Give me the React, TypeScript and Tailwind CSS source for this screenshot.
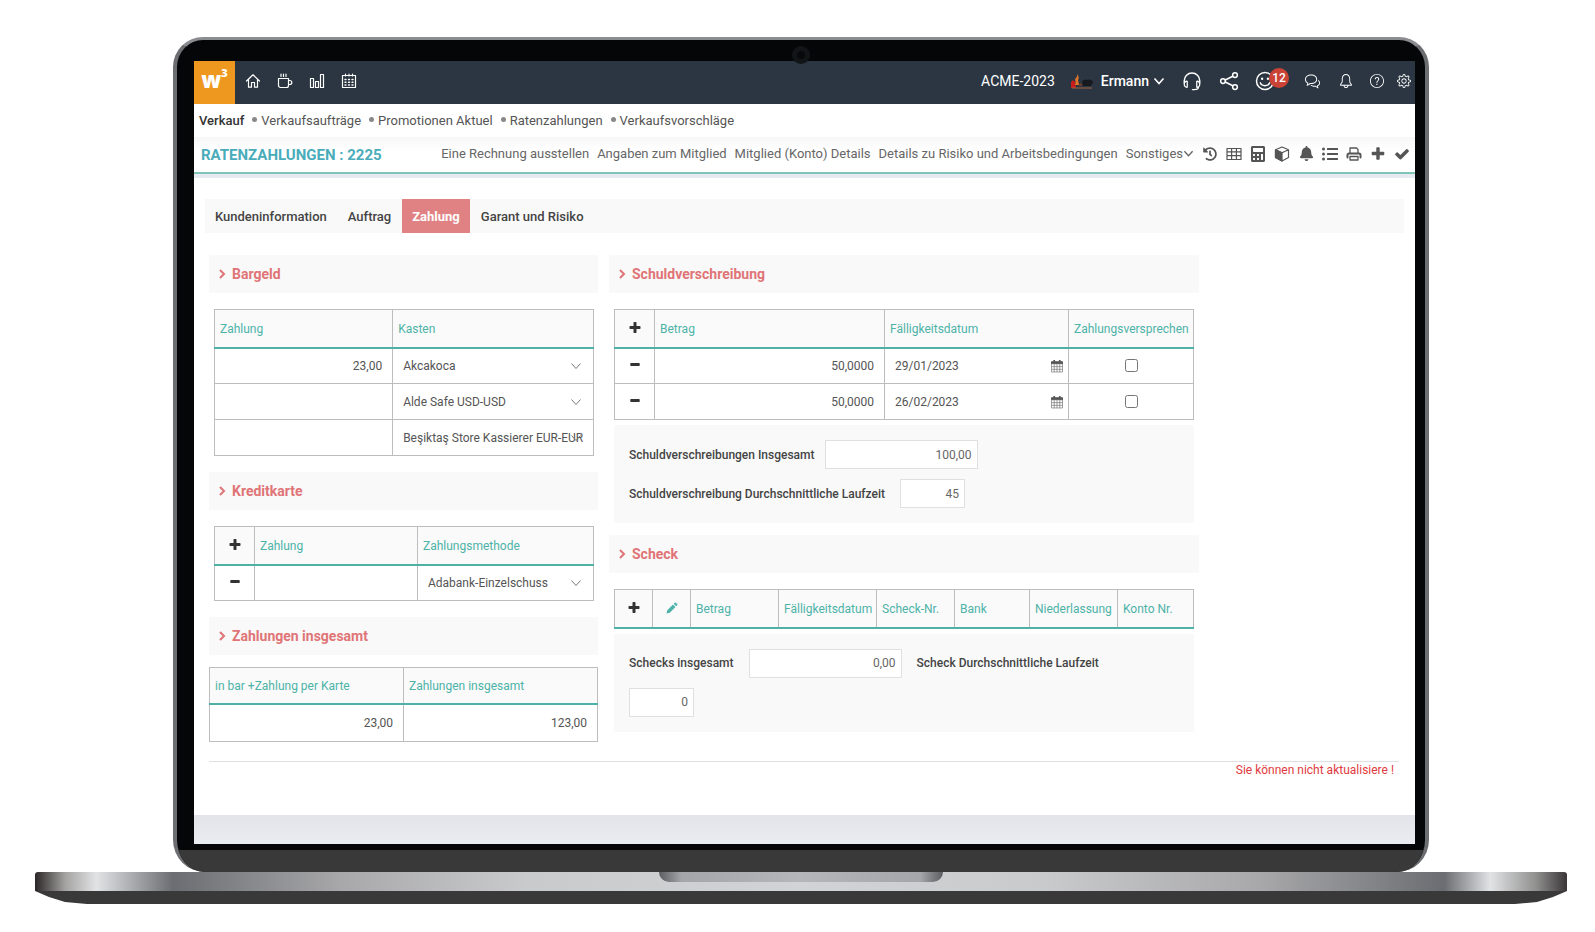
import { ReactNode, useState } from "react";
import { FaBell, FaCalculator, FaHistory, FaListUl } from "react-icons/fa";
import { SlBell, SlBubbles, SlQuestion, SlSettings } from "react-icons/sl";

type IconProps = { className?: string; children?: ReactNode };

// thin outline icons of the top bar
const Line = ({ className = "size-4", children }: IconProps) => (
  <svg
    viewBox="0 0 16 16"
    className={className}
    fill="none"
    stroke="currentColor"
    strokeWidth="1.2"
    strokeLinecap="round"
    strokeLinejoin="round"
    aria-hidden="true"
  >
    {children}
  </svg>
);

const Solid = ({ className = "size-4", children }: IconProps) => (
  <svg viewBox="0 0 1792 1792" className={className} fill="currentColor" aria-hidden="true">
    {children}
  </svg>
);

const Plus = ({ className }: IconProps) => (
  <Solid className={className}>
    <path d="M1600 736v192q0 40-28 68t-68 28h-416v416q0 40-28 68t-68 28h-192q-40 0-68-28t-28-68v-416h-416q-40 0-68-28t-28-68v-192q0-40 28-68t68-28h416v-416q0-40 28-68t68-28h192q40 0 68 28t28 68v416h416q40 0 68 28t28 68z" />
  </Solid>
);

const Minus = ({ className }: IconProps) => (
  <Solid className={className}>
    <path d="M1500 736v192q0 40-28 68t-68 28h-1016q-40 0-68-28t-28-68v-192q0-40 28-68t68-28h1016q40 0 68 28t28 68z" />
  </Solid>
);

const Check = ({ className }: IconProps) => (
  <Solid className={className}>
    <path d="M1671 566q0 40-28 68l-724 724-136 136q-28 28-68 28t-68-28l-136-136-362-362q-28-28-28-68t28-68l136-136q28-28 68-28t68 28l294 295 656-657q28-28 68-28t68 28l136 136q28 28 28 68z" />
  </Solid>
);

const Down = ({ className = "size-3" }: IconProps) => (
  <svg viewBox="0 0 12 12" className={className} fill="none" stroke="currentColor" aria-hidden="true">
    <path d="M1.5 3.5 6 8.5l4.5-5" />
  </svg>
);

const Calendar = () => (
  <svg viewBox="0 0 13 14" className="h-[14px] w-[12px]" fill="none" stroke="currentColor" aria-hidden="true">
    <path d="M.5 2.5h12v2H.5z" fill="currentColor" />
    <path d="M.5 2.5h12v11H.5zM.5 7.7h12M.5 10.6h12M3.5 5v8.5M6.5 5v8.5M9.5 5v8.5" strokeWidth=".6" />
    <path d="M3.5.5v3M9.5.5v3" strokeWidth="1.8" />
  </svg>
);

const menu = ["Verkaufsaufträge", "Promotionen Aktuel", "Ratenzahlungen", "Verkaufsvorschläge"];

const actions = [
  "Eine Rechnung ausstellen",
  "Angaben zum Mitglied",
  "Mitglied (Konto) Details",
  "Details zu Risiko und Arbeitsbedingungen",
];

const tabs = ["Kundeninformation", "Auftrag", "Zahlung", "Garant und Risiko"];

const cashRows = [
  { amount: "23,00", safe: "Akcakoca" },
  { amount: "", safe: "Alde Safe USD-USD" },
  { amount: "", safe: "Beşiktaş Store Kassierer EUR-EUR" },
];

const bondRows = [
  { amount: "50,0000", date: "29/01/2023" },
  { amount: "50,0000", date: "26/02/2023" },
];

const TopBar = () => (
  <header className="flex h-[43px] items-center bg-[#2b3642] pr-1 text-white">
    <a
      href="#"
      aria-label="W3"
      className="flex h-full w-[41px] justify-center bg-[#ef9820] pt-1 font-['Open_Sans',sans-serif] text-[22px] leading-7 font-extrabold"
    >
      w<sup className="top-0 text-[11px] leading-4">3</sup>
    </a>
    <nav className="ml-[10px] flex gap-4 pb-[3px]">
      <a href="#" aria-label="Home">
        <Line>
          <path d="M1.5 8 8 1.8 14.5 8M3.5 6.5v7.700h3V9.5h3v4.7h3V6.5" />
        </Line>
      </a>
      <a href="#" aria-label="Pause">
        <Line>
          <path d="M1.5 5.5h10v7a2 2 0 0 1-2 2h-6a2 2 0 0 1-2-2zM11.5 7.5h1.3a1.7 1.7 0 0 1 0 4h-1.3M4 1v2.5M6.5 1v2.5M9 1v2.5" />
        </Line>
      </a>
      <a href="#" aria-label="Berichte">
        <Line>
          <path d="M1.5 5.5h3v9h-3zM6.5 8.5h3v6h-3zM11.5 1.5h3v13h-3z" />
        </Line>
      </a>
      <a href="#" aria-label="Kalender">
        <Line>
          <path d="M1.5 2.5h13v12h-13zM4.5 1v2M8 1v2M11.5 1v2" />
          <path d="M4 6.5h1M7.5 6.5h1M11 6.5h1M4 9.2h1M7.5 9.2h1M11 9.2h1M4 12h1M7.5 12h1M11 12h1" strokeWidth="1.4" />
        </Line>
      </a>
    </nav>
    <div className="ml-auto flex items-center pb-[3px] text-[14px]">
      <span>ACME-2023</span>
      <svg viewBox="0 0 22 16" className="ml-4 h-4 w-[22px]" aria-hidden="true">
        <path d="M0 15V9l2-2 2 2 1 6z" fill="#c81e1e" />
        <path d="M4 12q1-4 0-6 2-1 2.500-5 2 4 .500 6l1 5z" fill="#e2762b" />
        <path d="M8 10.500h3v2.500H8z" fill="#6a3b2f" />
        <path d="M11 9q2-3.500 5-2 4-1.500 6 2l-2 4h-8z" fill="#16191e" />
        <path d="M1 15h20" stroke="#a5623e" />
      </svg>
      <button type="button" className="ml-2 flex items-center gap-1 font-medium">
        Ermann <Down className="size-3 stroke-[1.6]" />
      </button>
      <a href="#" aria-label="Support" className="ml-[17px]">
        <Line className="size-5">
          <path d="M1.800 9.500V7.800a6.200 6.200 0 0 1 12.400 0v1.700" />
          <path d="M4.200 8.200c-3.200-.4-3.200 5.200 0 4.800zM11.800 8.200c3.200-.4 3.200 5.200 0 4.800zM13.300 12.500c0 1.700-1.500 2.300-3.600 2.300H8.300" strokeWidth="1" />
        </Line>
      </a>
      <a href="#" aria-label="Teilen" className="ml-[17px]">
        <Line className="size-5">
          <circle cx="3.2" cy="8" r="1.9" />
          <circle cx="12.8" cy="3.2" r="1.9" />
          <circle cx="12.8" cy="12.8" r="1.9" />
          <path d="m5 7.2 6-3M5 8.8l6 3" />
        </Line>
      </a>
      <a href="#" aria-label="Stimmung" className="relative ml-[16px]">
        <Line className="size-5">
          <circle cx="8" cy="8" r="6.8" />
          <path d="M4.3 9.5c1 3 6.4 3 7.4 0" />
          <path d="M5.7 6v.3M10.3 6v.3" strokeWidth="1.8" />
        </Line>
        <span className="absolute -top-[3px] left-[14px] flex size-5 items-center justify-center rounded-full bg-[#cb4335] text-[12px] font-medium">
          12
        </span>
      </a>
      <a href="#" aria-label="Chat" className="ml-[30px]">
        <SlBubbles className="size-[15px]" />
      </a>
      <a href="#" aria-label="Meldungen" className="ml-[19px]">
        <SlBell className="size-[14px]" />
      </a>
      <a href="#" aria-label="Hilfe" className="ml-[17px]">
        <SlQuestion className="size-[14px]" />
      </a>
      <a href="#" aria-label="Einstellungen" className="ml-[13px]">
        <SlSettings className="size-[14px]" />
      </a>
    </div>
  </header>
);

const ActionBar = () => (
  <div className="flex h-[37px] items-center justify-between border-b-2 border-[#7fc4b8] bg-gradient-to-b from-[#f7f7f8] to-white to-40% pr-[5px] pl-[7px]">
    <h1 className="pt-px text-[15px] font-bold text-[#4aacba]">RATENZAHLUNGEN : 2225</h1>
    <div className="flex items-center pb-0.5 text-[13px] text-[#666]">
      <nav className="flex gap-2">
        {actions.map((a) => (
          <a key={a} href="#">
            {a}
          </a>
        ))}
        <button type="button" className="flex items-center">
          Sonstiges <Down className="size-[11px] stroke-[1.5]" />
        </button>
      </nav>
      <div className="ml-2 flex items-center gap-2 text-[#555]">
        <button type="button" aria-label="Verlauf" className="flex w-4 justify-center">
          <FaHistory className="size-[14px]" />
        </button>
        <button type="button" aria-label="Tabelle">
          <Line>
            <path d="M1 2.5h14v11H1zM1 5.8h14M1 9.6h14M5.6 2.5v11M10.4 2.5v11" />
          </Line>
        </button>
        <button type="button" aria-label="Rechner" className="flex w-4 justify-center">
          <FaCalculator className="size-4" />
        </button>
        <button type="button" aria-label="Produkte">
          <Line>
            <path d="M8 1 14.5 3.8v7.7L8 15l-6.5-3.5V3.8zM1.5 3.8 8 6.8l6.5-3" />
            <path d="M1.5 3.8 8 6.8V15l-6.5-3.5z" fill="currentColor" />
          </Line>
        </button>
        <button type="button" aria-label="Erinnerung" className="flex w-4 justify-center">
          <FaBell className="size-[15px]" />
        </button>
        <button type="button" aria-label="Liste">
          <FaListUl className="size-4" />
        </button>
        <button type="button" aria-label="Drucken">
          <Line>
            <path d="M4 7V2h6.5L12 3.5V7M4 10.5h8V14H4z" strokeWidth="1.3" />
            <path d="M1.5 11.5V9A1.5 1.5 0 0 1 3 7.5h10A1.5 1.5 0 0 1 14.5 9v2.5" strokeWidth="2" />
          </Line>
        </button>
        <button type="button" aria-label="Neu">
          <Plus />
        </button>
        <button type="button" aria-label="Speichern">
          <Check />
        </button>
      </div>
    </div>
  </div>
);

const SectionTitle = ({ children }: { children: ReactNode }) => (
  <h2 className="flex h-[38px] items-center gap-1.5 bg-[#f9f9f9] px-[10px] text-[14px] font-bold text-[#e07477]">
    <svg viewBox="0 0 7 10" className="h-[10px] w-[7px]" fill="none" stroke="currentColor" strokeWidth="2" aria-hidden="true">
      <path d="m1 1 4 4-4 4" />
    </svg>
    {children}
  </h2>
);

const Th = ({ children }: { children: ReactNode }) => (
  <th className="border border-b-2 border-[#bdbdbd] border-b-[#4db1a6] bg-[#fafafa] px-[5px] pt-[3px] pb-px text-left font-normal whitespace-nowrap text-[#4db3a8]">
    {children}
  </th>
);

const Td = ({ children }: { children: ReactNode }) => <td className="border border-[#bdbdbd] p-0">{children}</td>;

const IconButton = ({ label, children }: { label: string; children: ReactNode }) => (
  <button type="button" aria-label={label} className="flex w-full justify-center pb-0.5 text-[#333]">
    {children}
  </button>
);

const Amount = ({ label, value }: { label: string; value: string }) => (
  <input aria-label={label} defaultValue={value} className="block w-full bg-transparent px-[10px] text-right" />
);

const Select = ({ label, value }: { label: string; value: string }) => (
  <div className="relative">
    <select aria-label={label} defaultValue={value} className="block w-full appearance-none px-[10px]">
      <option>{value}</option>
    </select>
    <span className="pointer-events-none absolute inset-y-0 right-[11px] flex items-center text-[#777]">
      <Down />
    </span>
  </div>
);

const Field = ({ id, label, value, className }: { id: string; label: string; value: string; className: string }) => (
  <>
    <label htmlFor={id} className="font-medium">
      {label}
    </label>
    <input
      id={id}
      defaultValue={value}
      className={`h-[29px] border border-[#e0e0e0] bg-white px-[5px] text-right text-[#666] ${className}`}
    />
  </>
);

const Payment = () => (
  <div className="grid grid-cols-[389fr_590fr_194fr] gap-x-[11px] pl-1 text-[12px] text-[#555]">
    <div>
      <SectionTitle>Bargeld</SectionTitle>
      <div className="my-4 pr-1 pl-[5px]">
        <table className="w-full table-fixed border-collapse">
          <colgroup>
            <col className="w-[47%]" />
            <col />
          </colgroup>
          <thead>
            <tr className="h-[38px]">
              <Th>Zahlung</Th>
              <Th>Kasten</Th>
            </tr>
          </thead>
          <tbody>
            {cashRows.map((r) => (
              <tr key={r.safe} className="h-9">
                <Td>
                  <Amount label="Zahlung" value={r.amount} />
                </Td>
                <Td>
                  <Select label="Kasten" value={r.safe} />
                </Td>
              </tr>
            ))}
          </tbody>
        </table>
      </div>

      <SectionTitle>Kreditkarte</SectionTitle>
      <div className="my-4 pr-1 pl-[5px]">
        <table className="w-full table-fixed border-collapse">
          <colgroup>
            <col className="w-10" />
            <col className="w-[43%]" />
            <col />
          </colgroup>
          <thead>
            <tr className="h-[38px]">
              <Th>
                <IconButton label="Zeile hinzufügen">
                  <Plus className="size-[14px]" />
                </IconButton>
              </Th>
              <Th>Zahlung</Th>
              <Th>Zahlungsmethode</Th>
            </tr>
          </thead>
          <tbody>
            <tr className="h-9">
              <Td>
                <IconButton label="Zeile löschen">
                  <Minus className="size-[14px]" />
                </IconButton>
              </Td>
              <Td>
                <Amount label="Zahlung" value="" />
              </Td>
              <Td>
                <Select label="Zahlungsmethode" value="Adabank-Einzelschuss" />
              </Td>
            </tr>
          </tbody>
        </table>
      </div>

      <SectionTitle>Zahlungen insgesamt</SectionTitle>
      <table className="mt-3 w-full table-fixed border-collapse">
        <thead>
          <tr className="h-9">
            <Th>in bar +Zahlung per Karte</Th>
            <Th>Zahlungen insgesamt</Th>
          </tr>
        </thead>
        <tbody>
          <tr className="h-[38px]">
            <Td>
              <Amount label="in bar + Zahlung per Karte" value="23,00" />
            </Td>
            <Td>
              <Amount label="Zahlungen insgesamt" value="123,00" />
            </Td>
          </tr>
        </tbody>
      </table>
    </div>

    <div>
      <SectionTitle>Schuldverschreibung</SectionTitle>
      <div className="mt-4 mb-3 px-[5px]">
        <table className="w-full table-fixed border-collapse">
          <colgroup>
            <col className="w-10" />
            <col />
            <col className="w-[184px]" />
            <col className="w-[125px]" />
          </colgroup>
          <thead>
            <tr className="h-[38px]">
              <Th>
                <IconButton label="Zeile hinzufügen">
                  <Plus className="size-[14px]" />
                </IconButton>
              </Th>
              <Th>Betrag</Th>
              <Th>Fälligkeitsdatum</Th>
              <Th>Zahlungsversprechen</Th>
            </tr>
          </thead>
          <tbody>
            {bondRows.map((r) => (
              <tr key={r.date} className="h-9">
                <Td>
                  <IconButton label="Zeile löschen">
                    <Minus className="size-[14px]" />
                  </IconButton>
                </Td>
                <Td>
                  <Amount label="Betrag" value={r.amount} />
                </Td>
                <Td>
                  <div className="flex items-center pr-[5px] pl-[10px]">
                    <input aria-label="Fälligkeitsdatum" defaultValue={r.date} className="min-w-0 flex-1" />
                    <button type="button" aria-label="Kalender öffnen">
                      <Calendar />
                    </button>
                  </div>
                </Td>
                <Td>
                  <input type="checkbox" aria-label="Zahlungsversprechen" className="mx-auto block size-[13px]" />
                </Td>
              </tr>
            ))}
          </tbody>
        </table>
        <div className="mt-[5px] flex flex-col gap-[10px] bg-[#f9f9f9] p-[15px] text-[#444]">
          <div className="flex items-center gap-[10px]">
            <Field id="bond-total" label="Schuldverschreibungen Insgesamt" value="100,00" className="w-[153px]" />
          </div>
          <div className="flex items-center gap-[15px]">
            <Field id="bond-term" label="Schuldverschreibung Durchschnittliche Laufzeit" value="45" className="w-[65px]" />
          </div>
        </div>
      </div>

      <SectionTitle>Scheck</SectionTitle>
      <div className="mt-4 px-[5px]">
        <table className="w-full table-fixed border-collapse">
          <colgroup>
            <col className="w-[38px]" />
            <col className="w-[38px]" />
            <col className="w-[88px]" />
            <col className="w-[98px]" />
            <col className="w-[78px]" />
            <col className="w-[75px]" />
            <col className="w-[88px]" />
            <col />
          </colgroup>
          <thead>
            <tr className="h-[38px]">
              <Th>
                <IconButton label="Scheck hinzufügen">
                  <Plus className="size-[14px]" />
                </IconButton>
              </Th>
              <Th>
                <button type="button" aria-label="Scheck bearbeiten" className="flex w-full justify-center pb-0.5">
                  <svg viewBox="0 0 12 12" className="size-3" fill="currentColor" aria-hidden="true">
                    <path d="M.5 11.5 1.3 8.2 7 2.5 9.5 5 3.8 10.7zM7.7 1.8 8.7.8q.6-.6 1.2 0l1.3 1.3q.6.6 0 1.2l-1 1z" />
                  </svg>
                </button>
              </Th>
              <Th>Betrag</Th>
              <Th>Fälligkeitsdatum</Th>
              <Th>Scheck-Nr.</Th>
              <Th>Bank</Th>
              <Th>Niederlassung</Th>
              <Th>Konto Nr.</Th>
            </tr>
          </thead>
        </table>
        <div className="mt-[5px] flex flex-wrap items-center gap-x-[15px] gap-y-[10px] bg-[#f9f9f9] py-[15px] pr-20 pl-[15px] text-[#444]">
          <Field id="check-total" label="Schecks insgesamt" value="0,00" className="w-[153px]" />
          <Field id="check-term" label="Scheck Durchschnittliche Laufzeit" value="0" className="w-[65px]" />
        </div>
      </div>
    </div>
  </div>
);

const App = () => {
  const [tab, setTab] = useState("Zahlung");

  return (
    <div className="min-h-screen bg-white pt-[37px] pr-[28px] pl-[35px] font-[Roboto,sans-serif]">
      {/* lid */}
      <div className="relative mx-[138px] overflow-hidden rounded-t-[30px] rounded-b-[32px] border-x-4 border-t-[3px] border-[#6d6e72] border-t-[#8b8c90] bg-[#040607]">
        <div className="absolute top-[6px] left-1/2 flex size-[18px] -translate-x-1/2 items-center justify-center rounded-full bg-[#121517]">
          <div className="size-2 rounded-full bg-[#08090b]" />
        </div>

        <div className="mt-[21px] mr-[10px] mb-[6px] ml-[17px] bg-white">
          <TopBar />
          <nav className="flex h-[33px] items-center gap-2 pl-[5px] text-[13px] text-[#555]">
            <a href="#" className="font-medium text-[#333]">
              Verkauf
            </a>
            {menu.map((m) => (
              <a key={m} href="#" className="flex items-center gap-1">
                <span className="mb-0.5 size-[5px] rounded-full bg-[#888]" />
                {m}
              </a>
            ))}
          </nav>
          <ActionBar />
          <div className="h-1 bg-[#e8eaf1]" />

          <main className="px-[11px] pt-[21px]">
            <div role="tablist" className="mb-[22px] flex gap-px bg-[#f9f9f9]">
              {tabs.map((t) => (
                <button
                  key={t}
                  type="button"
                  role="tab"
                  aria-selected={t === tab}
                  onClick={() => setTab(t)}
                  className={`h-[34px] px-[10px] pt-0.5 text-[13px] ${
                    t === tab ? "bg-[#e08283] font-bold text-white" : "font-medium text-[#444]"
                  }`}
                >
                  {t}
                </button>
              ))}
            </div>

            <Payment />

            <div className="mt-[19px] mr-[5px] ml-1 border-t border-[#e0e0e0] pr-[5px] text-right text-[12px] leading-4 text-[#e03a3e]">
              Sie können nicht aktualisiere !
            </div>
          </main>
          <footer className="mt-[37px] h-[29px] bg-gradient-to-b from-[#e2e4ea] to-[#e9ecf1]" />
        </div>

        <div className="h-[22px] bg-[#393939]" />
      </div>

      {/* base */}
      <div className="flex h-[19px] justify-center rounded-t-[3px] bg-[linear-gradient(90deg,#2b2627_0%,#a5a4a3_2%,#e2e3e5_4%,#6b6d72_9%,#a8a8aa_20%,#c9cacc_32%,#d2d3d5_50%,#c9cacc_66%,#a8a8aa_80%,#6b6d72_92%,#e2e3e5_95%,#8f8f8e_98%,#3a3637_100%)]">
        <div className="h-[10px] w-[284px] rounded-b-[10px] bg-[linear-gradient(90deg,#5c5d60_0%,#a5a6a9_8%,#b5b6b9_50%,#a5a6a9_92%,#5c5d60_100%)]" />
      </div>
      <div className="h-[13px] bg-[#393939] [clip-path:polygon(0_0,100%_0,calc(100%-14px)_6px,calc(100%-30px)_11px,calc(100%-52px)_13px,52px_13px,30px_11px,14px_6px)]" />
    </div>
  );
};

export default App;
